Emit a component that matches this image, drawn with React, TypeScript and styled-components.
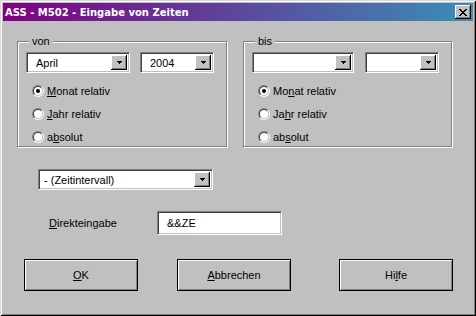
import React from 'react';
import styled, { createGlobalStyle } from 'styled-components';

const FACE = '#c0c0c0';

const Global = createGlobalStyle`
  html, body { margin: 0; padding: 0; background: ${FACE}; }
  body {
    width: 476px; height: 316px; overflow: hidden;
    font-family: "Liberation Sans", Arial, sans-serif;
    font-size: 11px; color: #000;
  }
`;

const Window = styled.div`
  box-sizing: border-box;
  width: 476px;
  height: 316px;
  background: ${FACE};
  padding: 3px;
  display: flex;
  flex-direction: column;
  box-shadow: inset 1px 1px 0 #d8d8d8, inset -1px -1px 0 #000,
    inset 2px 2px 0 #fff, inset -2px -2px 0 #808080;
`;

const TitleBar = styled.div`
  height: 18px;
  flex: none;
  display: flex;
  align-items: center;
  justify-content: space-between;
  padding: 0 2px;
  background: linear-gradient(to right, #800080, #3a8eb8);
`;

const Title = styled.span`
  font-family: "DejaVu Sans", Verdana, sans-serif;
  font-weight: bold;
  font-size: 10px;
  color: #fff;
  white-space: nowrap;
`;

const CloseButton = styled.div`
  box-sizing: border-box;
  width: 16px;
  height: 14px;
  background: ${FACE};
  display: flex;
  align-items: center;
  justify-content: center;
  box-shadow: inset -1px -1px 0 #000, inset 1px 1px 0 #fff,
    inset -2px -2px 0 #808080;
`;

const Body = styled.div`
  flex: 1;
  display: flex;
  flex-direction: column;
  align-items: flex-start;
  padding: 20px 0 0 14px;
`;

const GroupRow = styled.div`
  display: flex;
  gap: 16px;
`;

const GroupBox = styled.div<{ $w: number }>`
  position: relative;
  box-sizing: border-box;
  width: ${(p) => p.$w}px;
  height: 106px;
  border: 1px solid #808080;
  box-shadow: inset 1px 1px 0 #fff, 1px 1px 0 #fff;
  padding: 10px 0 0 8px;
`;

const Legend = styled.span`
  position: absolute;
  top: -7px;
  left: 11px;
  padding: 0 3px;
  line-height: 13px;
  background: ${FACE};
`;

const ComboRow = styled.div<{ $gap: number }>`
  display: flex;
  gap: ${(p) => p.$gap}px;
`;

const Field = styled.div<{ $w: number; $h: number; $indent: number }>`
  box-sizing: border-box;
  width: ${(p) => p.$w}px;
  height: ${(p) => p.$h}px;
  background: #fff;
  border: 1px solid;
  border-color: #808080 #fff #fff #808080;
  box-shadow: inset 1px 1px 0 #404040, inset -1px -1px 0 ${FACE};
  padding: 2px 2px 2px ${(p) => p.$indent}px;
  display: flex;
  align-items: center;
  white-space: nowrap;
`;

const FieldText = styled.span`
  flex: 1;
`;

const DropButton = styled.div`
  box-sizing: border-box;
  width: 16px;
  height: 100%;
  background: ${FACE};
  display: flex;
  align-items: center;
  justify-content: center;
  box-shadow: inset -1px -1px 0 #000, inset 1px 1px 0 #fff,
    inset -2px -2px 0 #808080;
`;

const RadioList = styled.div`
  display: flex;
  flex-direction: column;
  gap: 11px;
  margin: 12px 0 0 6px;
`;

const RadioRow = styled.div`
  display: flex;
  align-items: center;
  gap: 3px;
  height: 12px;
  white-space: nowrap;
`;

const RadioOuter = styled.span`
  box-sizing: border-box;
  width: 12px;
  height: 12px;
  border-radius: 50%;
  border: 1px solid;
  border-color: #808080 #fff #fff #808080;
  display: flex;
  align-items: center;
  justify-content: center;
`;

const RadioInner = styled.span`
  box-sizing: border-box;
  width: 10px;
  height: 10px;
  border-radius: 50%;
  border: 1px solid;
  border-color: #404040 ${FACE} ${FACE} #404040;
  background: #fff;
  display: flex;
  align-items: center;
  justify-content: center;
`;

const Dot = styled.span<{ $on: boolean }>`
  width: 4px;
  height: 4px;
  border-radius: 50%;
  background: ${(p) => (p.$on ? '#000' : 'transparent')};
`;

const U = styled.span`
  text-decoration: underline;
  text-underline-offset: 1px;
`;

const IntervalCombo = styled.div`
  margin: 22px 0 0 21px;
`;

const DirectRow = styled.div`
  display: flex;
  align-items: center;
  margin: 21px 0 0 32px;
`;

const DirectLabel = styled.span`
  width: 108px;
`;

const ButtonRow = styled.div`
  display: flex;
  margin-top: 24px;
`;

const Button = styled.button<{ $ml: number }>`
  box-sizing: border-box;
  width: 114px;
  height: 32px;
  margin-left: ${(p) => p.$ml}px;
  padding: 0;
  background: ${FACE};
  border: 1px solid #000;
  box-shadow: inset 1px 1px 0 #fff, inset -1px -1px 0 #808080;
  font-family: "Liberation Sans", Arial, sans-serif;
  font-size: 11px;
  color: #000;
`;

const CloseGlyph = () => (
  <svg width="8" height="7" viewBox="0 0 8 7" shapeRendering="crispEdges">
    <path
      d="M0 0h2v1h-2z M6 0h2v1h-2z M1 1h2v1h-2z M5 1h2v1h-2z M2 2h4v1h-4z M3 3h2v1h-2z M2 4h4v1h-4z M1 5h2v1h-2z M5 5h2v1h-2z M0 6h2v1h-2z M6 6h2v1h-2z"
      fill="#000"
    />
  </svg>
);

const Arrow = () => (
  <svg width="5" height="3" viewBox="0 0 5 3" shapeRendering="crispEdges">
    <path d="M0 0h5v1h-5z M1 1h3v1h-3z M2 2h1v1h-1z" fill="#000" />
  </svg>
);

const Combo = ({ w, h = 21, indent = 9, text }: { w: number; h?: number; indent?: number; text: string }) => (
  <Field $w={w} $h={h} $indent={indent}>
    <FieldText>{text}</FieldText>
    <DropButton>
      <Arrow />
    </DropButton>
  </Field>
);

const Radio = ({ on, children }: { on?: boolean; children: React.ReactNode }) => (
  <RadioRow>
    <RadioOuter>
      <RadioInner>
        <Dot $on={!!on} />
      </RadioInner>
    </RadioOuter>
    <span>{children}</span>
  </RadioRow>
);

export default function App() {
  return (
    <>
      <Global />
      <Window>
        <TitleBar>
          <Title>ASS - M502 - Eingabe von Zeiten</Title>
          <CloseButton>
            <CloseGlyph />
          </CloseButton>
        </TitleBar>
        <Body>
          <GroupRow>
            <GroupBox $w={210}>
              <Legend>von</Legend>
              <ComboRow $gap={10}>
                <Combo w={104} text="April" />
                <Combo w={74} text="2004" />
              </ComboRow>
              <RadioList>
                <Radio on>
                  <U>M</U>onat relativ
                </Radio>
                <Radio>
                  <U>J</U>ahr relativ
                </Radio>
                <Radio>
                  a<U>b</U>solut
                </Radio>
              </RadioList>
            </GroupBox>
            <GroupBox $w={209}>
              <Legend>bis</Legend>
              <ComboRow $gap={11}>
                <Combo w={102} text="" />
                <Combo w={74} text="" />
              </ComboRow>
              <RadioList>
                <Radio on>
                  Mo<U>n</U>at relativ
                </Radio>
                <Radio>
                  Ja<U>h</U>r relativ
                </Radio>
                <Radio>
                  ab<U>s</U>olut
                </Radio>
              </RadioList>
            </GroupBox>
          </GroupRow>
          <IntervalCombo>
            <Combo w={175} indent={5} text="- (Zeitintervall)" />
          </IntervalCombo>
          <DirectRow>
            <DirectLabel>
              <U>D</U>irekteingabe
            </DirectLabel>
            <Field $w={125} $h={24} $indent={9}>
              <FieldText>&amp;&amp;ZE</FieldText>
            </Field>
          </DirectRow>
          <ButtonRow>
            <Button $ml={7}>
              <U>O</U>K
            </Button>
            <Button $ml={39}>
              <U>A</U>bbrechen
            </Button>
            <Button $ml={48}>
              Hi<U>l</U>fe
            </Button>
          </ButtonRow>
        </Body>
      </Window>
    </>
  );
}
